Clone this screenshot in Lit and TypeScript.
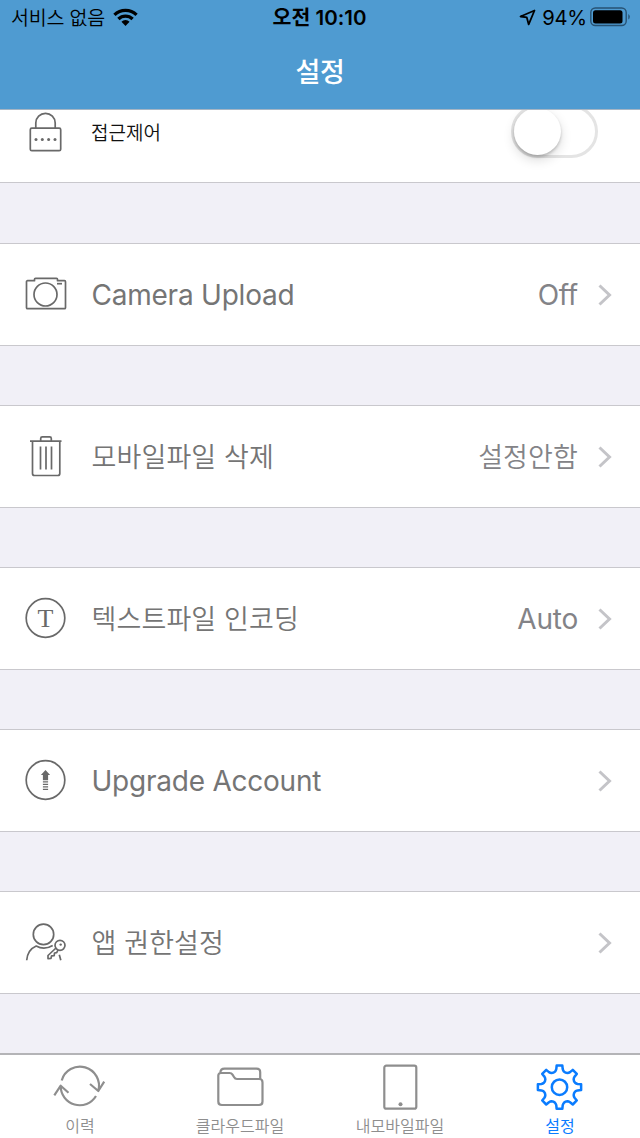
import { LitElement, html, css, svg } from "lit";
import { customElement, property } from "lit/decorators.js";

const gearPath = (() => {
  const pt = (r: number, deg: number) => {
    const a = (deg * Math.PI) / 180;
    return `${(24 + r * Math.sin(a)).toFixed(2)} ${(24 - r * Math.cos(a)).toFixed(2)}`;
  };
  let d = "";
  for (let i = 0; i < 8; i++) {
    const a = i * 45;
    d += `${i ? "L" : "M"}${pt(21.8, a - 7.5)}L${pt(21.8, a + 7.5)}L${pt(18.4, a + 10)}`;
    d += `Q${pt(17, a + 12)} ${pt(16.2, a + 16)}Q${pt(15.4, a + 22.5)} ${pt(16.2, a + 29)}Q${pt(17, a + 33)} ${pt(18.4, a + 35)}`;
  }
  return d + "Z";
})();

const icons: Record<string, unknown> = {
  lock: svg`<rect x="5.300" y="18.200" width="30.400" height="22.500" rx="1.500"/><path d="M10.800 18.200V13a9.700 9.700 0 0 1 19.400 0v5.200"/><g class="solid"><circle cx="11" cy="29.500" r="1.500"/><circle cx="17.300" cy="29.500" r="1.500"/><circle cx="23.600" cy="29.500" r="1.500"/><circle cx="30" cy="29.500" r="1.500"/></g>`,
  camera: svg`<path d="M9.500 7.700H2.500a1 1 0 0 0-1 1v26a1 1 0 0 0 1 1h37a1 1 0 0 0 1-1v-26a1 1 0 0 0-1-1h-7V6.300a1 1 0 0 0-1-1h-21a1 1 0 0 0-1 1z"/><circle cx="20.500" cy="21.500" r="11.500"/><path d="M32 10.700h5"/>`,
  trash: svg`<path d="M5 6.200h31.500M7.500 6.200v32.300q0 2 2 2h23.300q2 0 2-2V6.200M15.700 5.700V3.500q0-1.600 1.600-1.600h7.400q1.600 0 1.600 1.600v2.200M15.500 11.500v23M21 11.500v23M26.500 11.500v23"/>`,
  text: svg`<circle cx="20.500" cy="21" r="19.300"/><text class="glyph" x="20.500" y="29.800" text-anchor="middle">T</text>`,
  upgrade: svg`<circle cx="20.500" cy="21" r="19.300"/><g class="solid"><path d="M20.500 11l4.600 4.900h-2v5.300h-5.200v-5.300h-2z"/></g><path class="thin" d="M17.900 22.800h5.200M17.900 25.300h5.200M17.900 27.800h5.200M17.900 30.300h5.200"/>`,
  person: svg`<circle cx="18.500" cy="13.400" r="10.200"/><path d="M1.700 39.300q.8-10.500 9.500-14.300q8 4.500 16.500-.5M34.300 33.800l1.500 5.500"/><circle cx="35" cy="24.300" r="5"/><circle class="solid" cx="35.700" cy="23.600" r="1.200"/><path d="M31 27L23 34.500v3.100l3-.2.600-2.600 2.600-.2.300-2.600 2.200-.4 1.400-2.700"/>`,
  history: svg`<path d="M6.700 16.500a19 19 0 0 1 36.600 10.300M41 32a19 19 0 0 1-35.300-10M35 20l8.300 7L49.200 17.700M-.7 31.300L5.700 21.700l7.800 7"/>`,
  folder: svg`<path d="M3.300 11.500V37.500q0 3.500 3.500 3.500h37.200q3.500 0 3.500-3.500V18.500q0-3.500-3-3.500H22q-2 0-3-2l-1.500-2.400q-1-1.600-3-1.600H6.300Q3.300 9 3.300 11.500zM5.300 9q.2-4.300 4.200-4.300h32q3.700 0 3.700 3.500v7"/>`,
  tablet: svg`<rect x="9.300" y="1.700" width="32" height="43" rx="2"/><circle class="home" cx="25.500" cy="40.300" r="2"/>`,
  gear: svg`<g transform="translate(.5 -.8)"><path d="${gearPath}"/><circle cx="24" cy="24" r="7.700"/></g>`,
};

@customElement("line-icon")
class LineIcon extends LitElement {
  @property() name = "";
  @property() box = "42";
  static styles = css`
    :host { display: block; flex: none; }
    svg { display: block; width: 100%; height: 100%; fill: none; stroke: currentColor; stroke-width: var(--stroke, 1.7); stroke-linejoin: round; overflow: visible; }
    .solid { fill: currentColor; stroke: none; }
    .glyph { font: 26px "Liberation Serif", serif; fill: currentColor; stroke: none; }
    .thin { stroke-width: 1.2; }
    .home { fill: currentColor; stroke: none; }
  `;
  render() {
    return html`<svg viewBox="0 0 ${this.box} ${this.box}">${icons[this.name]}</svg>`;
  }
}

@customElement("settings-row")
class SettingsRow extends LitElement {
  @property() icon = "";
  @property() label = "";
  @property() value = "";
  static styles = css`
    :host { display: flex; align-items: center; box-sizing: border-box; height: 103px; padding: 0 28px 0 25px; background: #fff; border-top: 1px solid #c9c8cd; border-bottom: 1px solid #c9c8cd; color: #757575; }
    line-icon { width: 42px; height: 42px; margin-right: 24.500px; margin-bottom: 1px; color: #696969; }
    .label { flex: 1; }
    .latin { font-size: 28px; letter-spacing: -0.23px; font-weight: 380; padding-top: 1px; }
    .hangul { font-size: 27px; letter-spacing: 0.12px; font-weight: 350; padding-top: 2px; }
    .value { color: #838387; margin-right: 20px; }
    .chevron { display: block; width: 14px; height: 22px; fill: none; stroke: #c4c4c8; stroke-width: 3; }
  `;
  private script(text: string) {
    return /[가-힣]/.test(text) ? "hangul" : "latin";
  }
  render() {
    return html`
      <line-icon name=${this.icon}></line-icon>
      <span class="label ${this.script(this.label)}">${this.label}</span>
      ${this.value ? html`<span class="value ${this.script(this.value)}">${this.value}</span>` : ""}
      <svg class="chevron" viewBox="0 0 14 22"><path d="M1.500 1.500l10 9.500-10 9.500"/></svg>`;
  }
}

@customElement("app-root")
class AppRoot extends LitElement {
  static styles = css`
    :host { display: flex; flex-direction: column; height: 1138px; overflow: hidden; background: #f1f0f7; font-family: Inter, "Noto Sans CJK KR", sans-serif; line-height: 1.3; }
    header { flex: none; box-sizing: border-box; height: 110px; background: #4f9bd1; border-bottom: 1px solid #a5b5c4; }
    .status { display: grid; grid-template-columns: 1fr auto 1fr; align-items: center; height: 35px; padding: 0 10px 0 11px; color: #000; font-size: 20px; }
    .side { display: flex; align-items: center; }
    .end { justify-content: flex-end; }
    .carrier { font-size: 19.500px; letter-spacing: -0.2px; margin-right: 8px; font-weight: 350; padding-top: 2px; }
    .clock { font-weight: 600; font-size: 20.500px; letter-spacing: 0; margin-right: 2px; padding-top: 1px; }
    .wifi { width: 25px; height: 18.500px; display: block; margin-bottom: 1px; }
    .arrow { width: 17px; height: 17px; margin-right: 6.500px; fill: none; stroke: #000; stroke-width: 1.8; stroke-linejoin: round; }
    .percent { font-size: 20.200px; margin-right: 3px; padding-top: 1px; letter-spacing: -0.2px; }
    .battery { width: 40px; height: 20px; margin-bottom: 1px; }
    h1 { margin: 0; height: 72px; padding-top: 2px; display: flex; align-items: center; justify-content: center; color: #fff; font-size: 27px; font-weight: 500; letter-spacing: -0.4px; }
    .access { flex: none; display: flex; box-sizing: border-box; height: 73px; padding: 0 42px 0 25px; background: #fff; border-bottom: 1px solid #c9c8cd; overflow: hidden; }
    .access line-icon { width: 42px; height: 42px; margin-right: 24px; color: #696969; }
    .access .name { flex: 1; font-size: 19px; line-height: 28px; margin-top: 10px; color: #111; font-weight: 350; }
    .toggle { box-sizing: border-box; width: 87px; height: 53px; margin-top: -5px; border: 3px solid #e4e4e4; border-radius: 27px; background: #fff; }
    .knob { width: 47px; height: 47px; border-radius: 50%; background: #fff; box-shadow: 0 5px 12px rgba(0,0,0,.14), 0 2px 3px rgba(0,0,0,.2); }
    .list { flex: none; display: flex; flex-direction: column; gap: 59px; padding-top: 60px; }
    nav { flex: none; display: grid; grid-template-columns: repeat(4, 1fr); box-sizing: border-box; height: 85px; margin-top: auto; background: #fff; border-top: 2px solid #b4b4b7; }
    .tab { display: flex; flex-direction: column; align-items: center; color: #8e8e8e; font-size: 16px; line-height: 20px; font-weight: 350; padding-top: 9px; --stroke: 2.200; }
    .tab line-icon { width: 50px; height: 50px; }
    .tab span { margin-top: 2px; }
    .active { color: #0a7cff; --stroke: 2.500; font-weight: 400; }
  `;
  render() {
    const rows = [
      ["camera", "Camera Upload", "Off"],
      ["trash", "모바일파일 삭제", "설정안함"],
      ["text", "텍스트파일 인코딩", "Auto"],
      ["upgrade", "Upgrade Account", ""],
      ["person", "앱 권한설정", ""],
    ];
    const tabs = [
      ["history", "이력"],
      ["folder", "클라우드파일"],
      ["tablet", "내모바일파일"],
      ["gear", "설정"],
    ];
    return html`
      <header>
        <div class="status">
          <div class="side">
            <span class="carrier">서비스 없음</span>
            <svg class="wifi" viewBox="0 0 26 19"><g fill="none" stroke="#000" stroke-width="3.400"><path d="M1.500 7a16.400 16.400 0 0 1 23 0M5.600 11.300a10.600 10.600 0 0 1 14.800 0"/></g><path d="M13 18.500l-4.200-4.300a6 6 0 0 1 8.400 0z"/></svg>
          </div>
          <span class="clock">오전 10:10</span>
          <div class="side end">
            <svg class="arrow" viewBox="0 0 17 17"><path d="M15.500 1.500L1.500 7.500l6.300.900 1.900 7z"/></svg>
            <span class="percent">94%</span>
            <svg class="battery" viewBox="0 0 40 20"><rect x=".8" y="1" width="35.400" height="17.500" rx="4.500" fill="none" stroke="#275273" stroke-width="1.400"/><rect x="3" y="3.200" width="29.500" height="13.200" rx="2.500"/><path d="M38.300 7v5.500q1.500-.8 1.500-2.700t-1.500-2.800z" fill="#275273"/></svg>
          </div>
        </div>
        <h1>설정</h1>
      </header>
      <section class="access">
        <line-icon name="lock"></line-icon>
        <span class="name">접근제어</span>
        <div class="toggle"><div class="knob"></div></div>
      </section>
      <main class="list">
        ${rows.map(([icon, label, value]) => html`<settings-row icon=${icon} label=${label} value=${value}></settings-row>`)}
      </main>
      <nav>
        ${tabs.map(([icon, label]) => html`<div class="tab ${icon === "gear" ? "active" : ""}"><line-icon name=${icon} box="50"></line-icon><span>${label}</span></div>`)}
      </nav>`;
  }
}
